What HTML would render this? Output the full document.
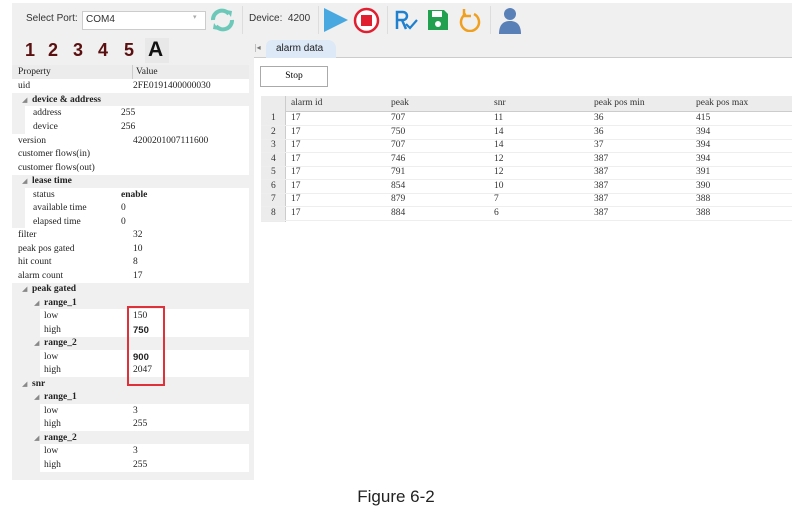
<!DOCTYPE html>
<html><head><style>
body{margin:0;width:792px;height:514px;background:#fff;position:relative;font-family:"Liberation Serif","SimSun",serif;overflow:hidden}
.a{position:absolute}
.tb{left:12px;top:3px;width:780px;height:35px;background:#f0f0f0;border-bottom:1px solid #ddd}
.s{font-family:"Liberation Sans",sans-serif;font-size:10px;color:#333}
.lp{left:12px;top:38px;width:238px;height:442px;background:#f0f0f0}
.row{position:absolute;left:12px;width:237px;height:13.5px;font-size:9.5px;color:#222;line-height:15px}
.row span{position:absolute}
.w{background:#fff}
.b{font-weight:bold}
.num{font-family:"Liberation Sans",sans-serif;font-size:18px;font-weight:bold;color:#5a1010;top:40px}
.tr{position:absolute;left:261px;width:531px;height:13.5px;font-size:9.5px;line-height:14px;color:#333;border-bottom:1px solid #eee}
.tr span{position:absolute}
</style></head><body>
<div class="a tb"></div>
<div class="a s" style="left:26px;top:13px">Select Port:</div>
<div class="a" style="left:82px;top:11px;width:122px;height:17px;background:#fff;border:1px solid #ccc"></div>
<div class="a s" style="left:86px;top:14px">COM4</div>
<div class="a" style="left:193px;top:13px;font-size:7px;color:#aaa">▾</div>
<svg class="a" style="left:209px;top:7px" width="27" height="26" viewBox="0 0 27 26"><path d="M4 13a9 9 0 0 1 16-6" stroke="#6cc8b8" stroke-width="4" fill="none"/><path d="M23 13a9 9 0 0 1-16 6" stroke="#6cc8b8" stroke-width="4" fill="none"/><path d="M17 3l6 1-1 6z M10 23l-6-1 1-6z" fill="#6cc8b8"/></svg>
<div class="a" style="left:242px;top:6px;width:1px;height:28px;background:#ddd"></div>
<div class="a s" style="left:249px;top:13px">Device:&nbsp; 4200</div>
<div class="a" style="left:318px;top:6px;width:1px;height:28px;background:#ddd"></div>
<svg class="a" style="left:323px;top:7px" width="26" height="26"><path d="M1 1L25 13L1 25Z" fill="#4aa8e0"/></svg>
<svg class="a" style="left:353px;top:7px" width="27" height="27"><circle cx="13.5" cy="13.5" r="11.5" stroke="#e02030" stroke-width="2.5" fill="#fff"/><rect x="8" y="8" width="11" height="11" fill="#e02030"/></svg>
<div class="a" style="left:387px;top:6px;width:1px;height:28px;background:#ddd"></div>
<svg class="a" style="left:394px;top:9px" width="24" height="24"><path d="M3 20V3h6a4 4 0 0 1 0 8H3M8 11l4 9" stroke="#2080d0" stroke-width="2.5" fill="none"/><path d="M12 15l4 4 7-8" stroke="#2080d0" stroke-width="2.2" fill="none"/></svg>
<svg class="a" style="left:427px;top:9px" width="22" height="22"><path d="M1 1h16l4 4v16H1z" fill="#22a050"/><rect x="5" y="2" width="10" height="6" fill="#fff"/><circle cx="11" cy="15" r="3" fill="#fff"/></svg>
<svg class="a" style="left:458px;top:8px" width="24" height="24"><path d="M8 6a9 9 0 1 0 8 0" stroke="#f0a020" stroke-width="2.5" fill="none"/><path d="M6 1v7h7" stroke="#f0a020" stroke-width="2.5" fill="none"/></svg>
<div class="a" style="left:490px;top:6px;width:1px;height:28px;background:#ddd"></div>
<svg class="a" style="left:497px;top:6px" width="26" height="28"><circle cx="13" cy="8" r="6" fill="#5a80b8"/><path d="M2 28c0-10 5-13 11-13s11 3 11 13z" fill="#5a80b8"/></svg>

<div class="a lp"></div>
<div class="a num" style="left:25px">1</div>
<div class="a num" style="left:48px">2</div>
<div class="a num" style="left:73px">3</div>
<div class="a num" style="left:98px">4</div>
<div class="a num" style="left:124px">5</div>
<div class="a" style="left:145px;top:38px;width:24px;height:25px;background:#e8e8e8"></div>
<div class="a" style="left:148px;top:38px;font-family:'Liberation Sans',sans-serif;font-size:21px;font-weight:bold;color:#111">A</div>

<div class="row" style="top:65px;background:#ececec;border-bottom:1px solid #ddd"><span style="left:6px">Property</span><span style="left:120px;border-left:1px solid #ccc;padding-left:3px;height:13.5px">Value</span></div>
<div class="row w" style="top:79px"><span style="left:6px">uid</span><span style="left:121px">2FE0191400000030</span></div>
<div class="row" style="top:93px"><span style="left:10px;font-size:7px;color:#888">◢</span><span class="b" style="left:20px">device &amp; address</span></div>
<div class="row w" style="top:106px;left:25px;width:224px"><span style="left:8px">address</span><span style="left:96px">255</span></div>
<div class="row w" style="top:120px;left:25px;width:224px"><span style="left:8px">device</span><span style="left:96px">256</span></div>
<div class="row w" style="top:134px"><span style="left:6px">version</span><span style="left:121px">4200201007111600</span></div>
<div class="row w" style="top:147px"><span style="left:6px">customer flows(in)</span></div>
<div class="row w" style="top:161px"><span style="left:6px">customer flows(out)</span></div>
<div class="row" style="top:174px"><span style="left:10px;font-size:7px;color:#888">◢</span><span class="b" style="left:20px">lease time</span></div>
<div class="row w" style="top:188px;left:25px;width:224px"><span style="left:8px">status</span><span class="b" style="left:96px">enable</span></div>
<div class="row w" style="top:201px;left:25px;width:224px"><span style="left:8px">available time</span><span style="left:96px">0</span></div>
<div class="row w" style="top:215px;left:25px;width:224px"><span style="left:8px">elapsed time</span><span style="left:96px">0</span></div>
<div class="row w" style="top:228px"><span style="left:6px">filter</span><span style="left:121px">32</span></div>
<div class="row w" style="top:242px"><span style="left:6px">peak pos gated</span><span style="left:121px">10</span></div>
<div class="row w" style="top:255px"><span style="left:6px">hit count</span><span style="left:121px">8</span></div>
<div class="row w" style="top:269px"><span style="left:6px">alarm count</span><span style="left:121px">17</span></div>
<div class="row" style="top:282px"><span style="left:10px;font-size:7px;color:#888">◢</span><span class="b" style="left:20px">peak gated</span></div>
<div class="row" style="top:296px"><span style="left:22px;font-size:7px;color:#888">◢</span><span class="b" style="left:32px">range_1</span></div>
<div class="row w" style="top:309px;left:40px;width:209px"><span style="left:4px">low</span><span style="left:93px">150</span></div>
<div class="row w" style="top:323px;left:40px;width:209px"><span style="left:4px">high</span><span class="b" style="left:93px;font-family:'Liberation Sans',sans-serif">750</span></div>
<div class="row" style="top:336px"><span style="left:22px;font-size:7px;color:#888">◢</span><span class="b" style="left:32px">range_2</span></div>
<div class="row w" style="top:350px;left:40px;width:209px"><span style="left:4px">low</span><span class="b" style="left:93px;font-family:'Liberation Sans',sans-serif">900</span></div>
<div class="row w" style="top:363px;left:40px;width:209px"><span style="left:4px">high</span><span style="left:93px">2047</span></div>
<div class="row" style="top:377px"><span style="left:10px;font-size:7px;color:#888">◢</span><span class="b" style="left:20px">snr</span></div>
<div class="row" style="top:390px"><span style="left:22px;font-size:7px;color:#888">◢</span><span class="b" style="left:32px">range_1</span></div>
<div class="row w" style="top:404px;left:40px;width:209px"><span style="left:4px">low</span><span style="left:93px">3</span></div>
<div class="row w" style="top:417px;left:40px;width:209px"><span style="left:4px">high</span><span style="left:93px">255</span></div>
<div class="row" style="top:431px"><span style="left:22px;font-size:7px;color:#888">◢</span><span class="b" style="left:32px">range_2</span></div>
<div class="row w" style="top:444px;left:40px;width:209px"><span style="left:4px">low</span><span style="left:93px">3</span></div>
<div class="row w" style="top:458px;left:40px;width:209px"><span style="left:4px">high</span><span style="left:93px">255</span></div>
<div class="a" style="left:127px;top:306px;width:34px;height:76px;border:2px solid #e0303a"></div>

<div class="a" style="left:250px;top:38px;width:542px;height:19px;background:#f0f0f0;border-bottom:1px solid #ccc"></div>
<div class="a" style="left:255px;top:43px;font-size:8px;color:#777">|◂</div>
<div class="a" style="left:266px;top:40px;width:70px;height:18px;background:#dde9f7;border-radius:6px 8px 0 0"></div>
<div class="a s" style="left:276px;top:43px;color:#222">alarm data</div>
<div class="a" style="left:250px;top:57px;width:4px;height:423px;background:#f0f0f0"></div>
<div class="a" style="left:260px;top:66px;width:66px;height:19px;border:1px solid #aaa;background:#fff;font-size:9.5px;text-align:center;line-height:19px">Stop</div>

<div class="a" style="left:261px;top:96px;width:531px;height:15px;background:#ececec;border-bottom:1px solid #ccc"></div>
<div class="a" style="left:261px;top:96px;width:24px;height:126px;background:#ececec;border-right:1px solid #ccc"></div>
<div class="tr" style="top:96px;border:none;height:15px;line-height:15px"><span style="left:30px">alarm id</span><span style="left:130px">peak</span><span style="left:233px">snr</span><span style="left:333px">peak pos min</span><span style="left:435px">peak pos max</span></div>
<div class="tr" style="top:111px"><span style="left:10px">1</span><span style="left:30px">17</span><span style="left:130px">707</span><span style="left:233px">11</span><span style="left:333px">36</span><span style="left:435px">415</span></div>
<div class="tr" style="top:125px"><span style="left:10px">2</span><span style="left:30px">17</span><span style="left:130px">750</span><span style="left:233px">14</span><span style="left:333px">36</span><span style="left:435px">394</span></div>
<div class="tr" style="top:138px"><span style="left:10px">3</span><span style="left:30px">17</span><span style="left:130px">707</span><span style="left:233px">14</span><span style="left:333px">37</span><span style="left:435px">394</span></div>
<div class="tr" style="top:152px"><span style="left:10px">4</span><span style="left:30px">17</span><span style="left:130px">746</span><span style="left:233px">12</span><span style="left:333px">387</span><span style="left:435px">394</span></div>
<div class="tr" style="top:165px"><span style="left:10px">5</span><span style="left:30px">17</span><span style="left:130px">791</span><span style="left:233px">12</span><span style="left:333px">387</span><span style="left:435px">391</span></div>
<div class="tr" style="top:179px"><span style="left:10px">6</span><span style="left:30px">17</span><span style="left:130px">854</span><span style="left:233px">10</span><span style="left:333px">387</span><span style="left:435px">390</span></div>
<div class="tr" style="top:192px"><span style="left:10px">7</span><span style="left:30px">17</span><span style="left:130px">879</span><span style="left:233px">7</span><span style="left:333px">387</span><span style="left:435px">388</span></div>
<div class="tr" style="top:206px"><span style="left:10px">8</span><span style="left:30px">17</span><span style="left:130px">884</span><span style="left:233px">6</span><span style="left:333px">387</span><span style="left:435px">388</span></div>

<div class="a" style="left:0;top:487px;width:792px;text-align:center;font-family:'Liberation Sans',sans-serif;font-size:17px;color:#222">Figure 6-2</div>
</body></html>
